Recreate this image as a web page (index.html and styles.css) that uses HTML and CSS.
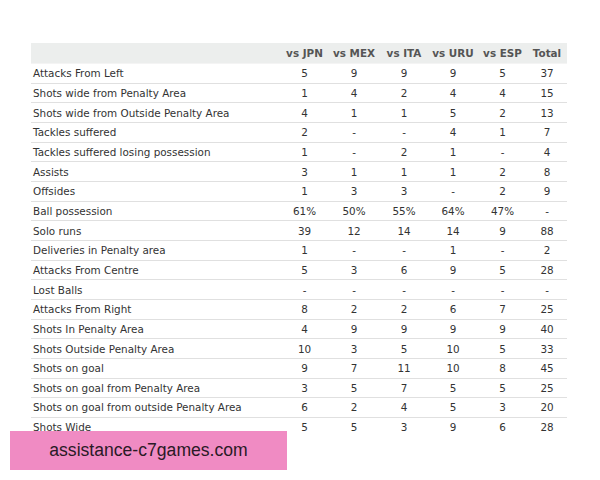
FILE: index.html
```html
<!DOCTYPE html>
<html>
<head>
<meta charset="utf-8">
<link rel="stylesheet" href="styles.css">
</head>
<body>
<div class="page">
<table class="stats">
<colgroup>
<col class="c-label"><col class="c-jpn"><col class="c-mex"><col class="c-ita"><col class="c-uru"><col class="c-esp"><col class="c-tot">
</colgroup>
<thead>
<tr><th></th><th>vs JPN</th><th>vs MEX</th><th>vs ITA</th><th>vs URU</th><th>vs ESP</th><th>Total</th></tr>
</thead>
<tbody>
<tr><td>Attacks From Left</td><td>5</td><td>9</td><td>9</td><td>9</td><td>5</td><td>37</td></tr>
<tr><td>Shots wide from Penalty Area</td><td>1</td><td>4</td><td>2</td><td>4</td><td>4</td><td>15</td></tr>
<tr><td>Shots wide from Outside Penalty Area</td><td>4</td><td>1</td><td>1</td><td>5</td><td>2</td><td>13</td></tr>
<tr><td>Tackles suffered</td><td>2</td><td>-</td><td>-</td><td>4</td><td>1</td><td>7</td></tr>
<tr><td>Tackles suffered losing possession</td><td>1</td><td>-</td><td>2</td><td>1</td><td>-</td><td>4</td></tr>
<tr><td>Assists</td><td>3</td><td>1</td><td>1</td><td>1</td><td>2</td><td>8</td></tr>
<tr><td>Offsides</td><td>1</td><td>3</td><td>3</td><td>-</td><td>2</td><td>9</td></tr>
<tr><td>Ball possession</td><td>61%</td><td>50%</td><td>55%</td><td>64%</td><td>47%</td><td>-</td></tr>
<tr><td>Solo runs</td><td>39</td><td>12</td><td>14</td><td>14</td><td>9</td><td>88</td></tr>
<tr><td>Deliveries in Penalty area</td><td>1</td><td>-</td><td>-</td><td>1</td><td>-</td><td>2</td></tr>
<tr><td>Attacks From Centre</td><td>5</td><td>3</td><td>6</td><td>9</td><td>5</td><td>28</td></tr>
<tr><td>Lost Balls</td><td>-</td><td>-</td><td>-</td><td>-</td><td>-</td><td>-</td></tr>
<tr><td>Attacks From Right</td><td>8</td><td>2</td><td>2</td><td>6</td><td>7</td><td>25</td></tr>
<tr><td>Shots In Penalty Area</td><td>4</td><td>9</td><td>9</td><td>9</td><td>9</td><td>40</td></tr>
<tr><td>Shots Outside Penalty Area</td><td>10</td><td>3</td><td>5</td><td>10</td><td>5</td><td>33</td></tr>
<tr><td>Shots on goal</td><td>9</td><td>7</td><td>11</td><td>10</td><td>8</td><td>45</td></tr>
<tr><td>Shots on goal from Penalty Area</td><td>3</td><td>5</td><td>7</td><td>5</td><td>5</td><td>25</td></tr>
<tr><td>Shots on goal from outside Penalty Area</td><td>6</td><td>2</td><td>4</td><td>5</td><td>3</td><td>20</td></tr>
<tr><td>Shots Wide</td><td>5</td><td>5</td><td>3</td><td>9</td><td>6</td><td>28</td></tr>
</tbody>
</table>
<div class="banner">assistance-c7games.com</div>
</div>
</body>
</html>
```
FILE: styles.css
```css
html, body {
  margin: 0;
  padding: 0;
  background: #fff;
}
.page {
  position: relative;
  width: 600px;
  height: 480px;
  padding: 43px 0 0 31px;
  box-sizing: border-box;
  font-family: "DejaVu Sans", Verdana, sans-serif;
  font-size: 10.4px;
  color: #333;
}
.stats {
  border-collapse: collapse;
  width: 536px;
  table-layout: fixed;
}
.c-label { width: 250px; }
.c-jpn { width: 47px; }
.c-mex { width: 52px; }
.c-ita { width: 48px; }
.c-uru { width: 50px; }
.c-esp { width: 49px; }
.c-tot { width: 40px; }
.stats th {
  background: #eceeed;
  color: #555;
  font-weight: bold;
  height: 20px;
  padding: 0;
  text-align: center;
  border-bottom: 1px solid #f4f4f4;
}
.stats td {
  height: 18.67px;
  padding: 0;
  text-align: center;
  border-bottom: 1px solid #e0e0e0;
  white-space: nowrap;
}
.stats td:first-child {
  text-align: left;
  padding-left: 2px;
}
.stats tbody tr:last-child td {
  border-bottom: none;
}
.banner {
  position: absolute;
  left: 10px;
  top: 431px;
  width: 277px;
  height: 39px;
  background: #f08bc3;
  color: #2a1a26;
  font-family: "Liberation Sans", Arial, sans-serif;
  font-size: 17.6px;
  line-height: 39px;
  text-align: center;
}
```
